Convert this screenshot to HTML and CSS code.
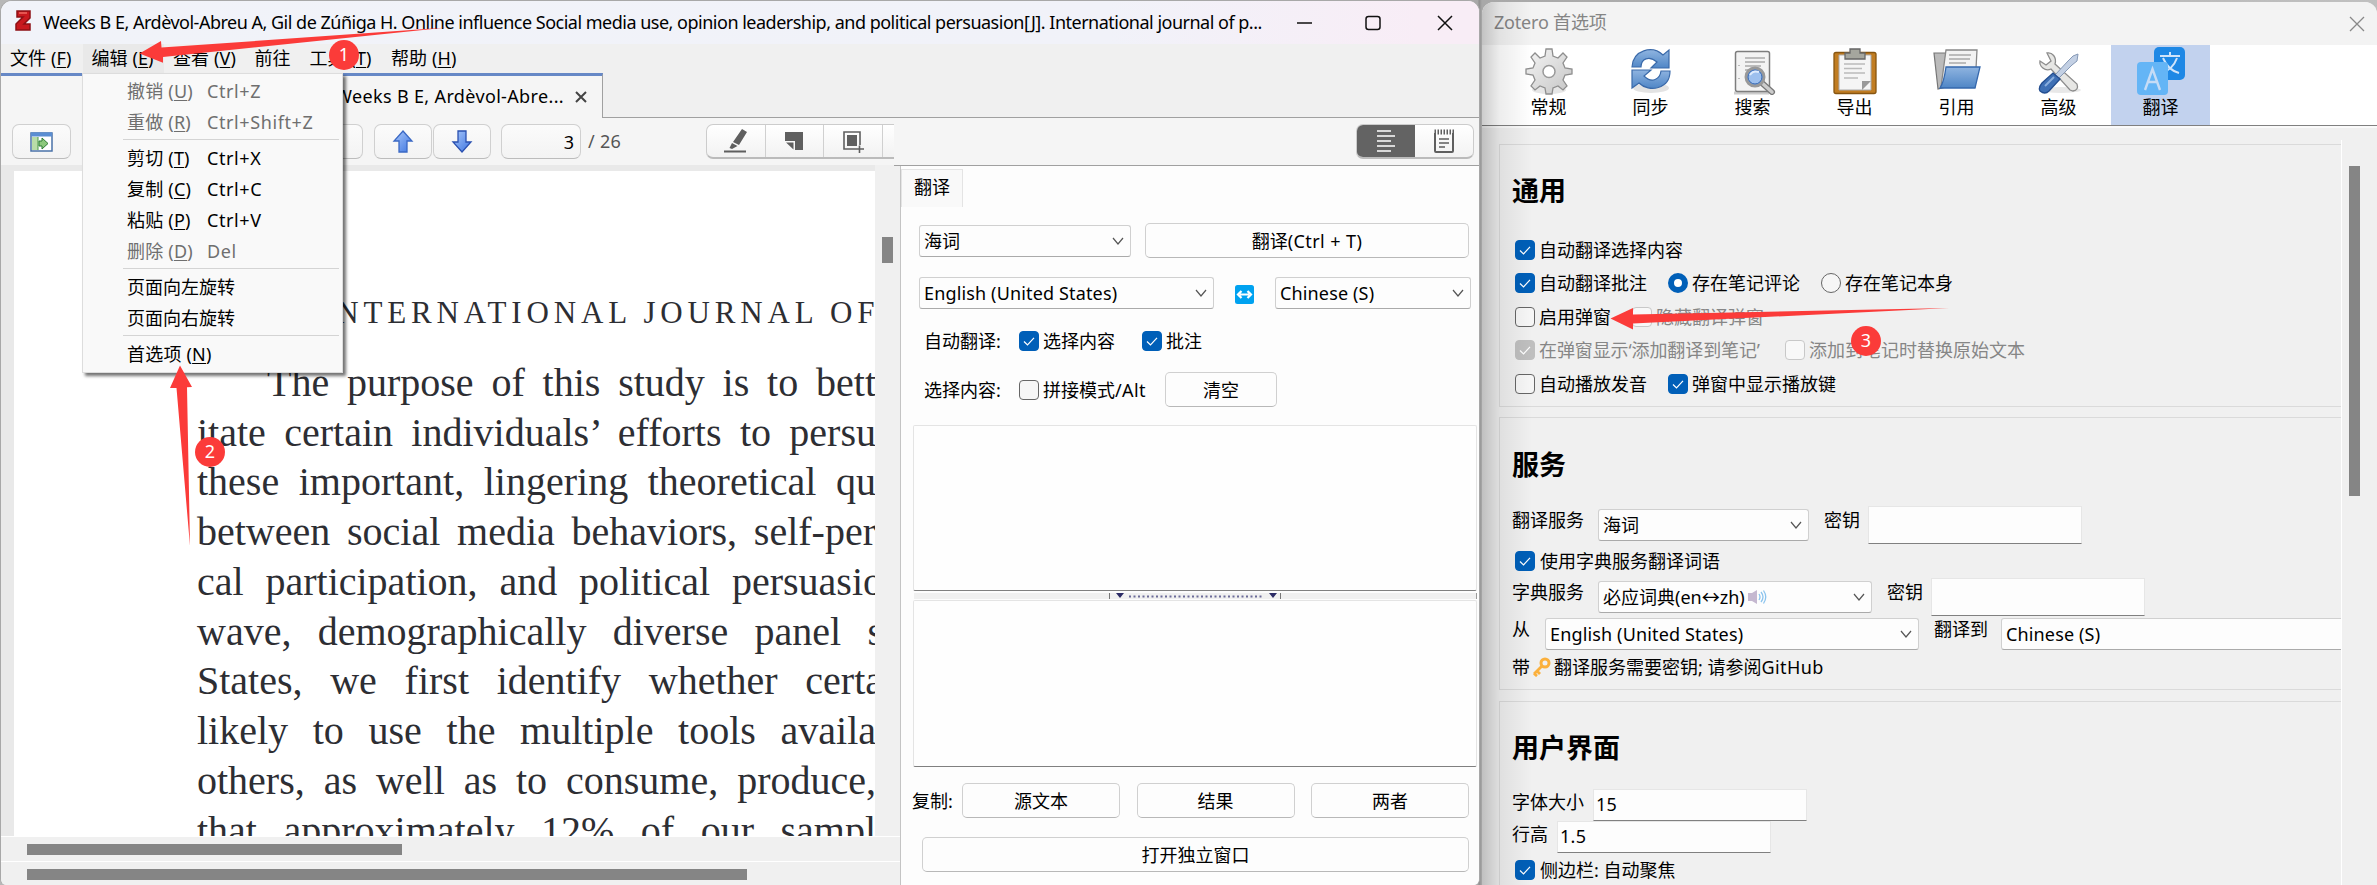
FILE: index.html
```
<!DOCTYPE html>
<html lang="zh-CN">
<head>
<meta charset="utf-8">
<title>Zotero</title>
<link rel="stylesheet" href="styles.css">
</head>
<body>
<svg width="0" height="0" class="defs">
  <defs>
    <linearGradient id="gm" x1="0" y1="0" x2="1" y2="1"><stop offset="0" stop-color="#f6f6f6"/><stop offset="1" stop-color="#c4c4c4"/></linearGradient>
    <linearGradient id="gb" x1="0" y1="0" x2="0" y2="1"><stop offset="0" stop-color="#8fb4e0"/><stop offset="1" stop-color="#4f86c6"/></linearGradient>
    <linearGradient id="ga" x1="0" y1="0" x2="1" y2="1"><stop offset="0" stop-color="#a9c8fa"/><stop offset="1" stop-color="#3d74e0"/></linearGradient>
    <symbol id="chev" viewBox="0 0 12 8"><path d="M1 1 6 7 11 1" fill="none" stroke="#555" stroke-width="1.2"/></symbol>
    <symbol id="tick" viewBox="0 0 20 20"><path d="M5 10.500 8.500 14 15 6.800" fill="none" stroke="#fff" stroke-width="1.2"/></symbol>
  </defs>
</svg>
<div class="desktop">

<main class="win">
  <header class="title">
    <svg class="logo" width="18" height="22" viewBox="0 0 18 22"><path d="M2 1H15V8L9 14H15V20H1V14L8 7H2Z" fill="#c8191e" stroke="#8d1014" stroke-width="1.5"/><path d="M4 3H12" stroke="#ef6a62" stroke-width="1.500"/></svg>
    <span class="caption">Weeks B E, Ardèvol-Abreu A, Gil de Zúñiga H. Online influence Social media use, opinion leadership, and political persuasion[J]. International journal of p...</span>
    <svg class="winctl" width="160" height="20" viewBox="0 0 160 20" fill="none" stroke="#111" stroke-width="1.500"><path d="M1 10H16M142 3 156 17M156 3 142 17"/><rect x="70" y="3.500" width="14" height="13" rx="2.500"/></svg>
  </header>
  <nav class="menubar">
    <span class="mi">文件 (<u>F</u>)</span><span class="mi on">编辑 (<u>E</u>)</span><span class="mi">查看 (<u>V</u>)</span><span class="mi short">前往</span><span class="mi">工具 (<u>T</u>)</span><span class="mi">帮助 (<u>H</u>)</span>
  </nav>
  <div class="tabs"><div class="tab"><span>Weeks B E, Ardèvol-Abre...</span><svg width="14" height="14" viewBox="0 0 14 14"><path d="M2 2 12 12M12 2 2 12" stroke="#444" stroke-width="2"/></svg></div><div class="tabfill"></div></div>
  <div class="work">
    <section class="reader">
      <div class="toolbar">
        <div class="tb side"><svg width="24" height="22" viewBox="0 0 24 22"><rect x="1" y="2" width="21" height="18" fill="#fff" stroke="#4a72a8" stroke-width="1.500"/><path d="M1 3.500H22" stroke="#5b8ed2" stroke-width="4"/><rect x="2" y="6" width="6" height="13" fill="#b9dca8"/><path d="M8 6V19" stroke="#4a9a48"/><path d="M9 10H12V7L18 12.500 12 18V15H9Z" fill="#8cc87c" stroke="#2f7c35"/></svg></div>
        <div class="tb prev"></div>
        <div class="tb up"><svg width="22" height="26" viewBox="0 0 22 26"><path d="M11 2 20 12H15V23H7V12H2Z" fill="url(#ga)" stroke="#3a68c4" stroke-width="1.300"/></svg></div>
        <div class="tb down"><svg width="22" height="26" viewBox="0 0 22 26"><path d="M11 23 20 13H15V2H7V13H2Z" fill="url(#ga)" stroke="#2a50b0" stroke-width="1.300"/></svg></div>
        <div class="tb page">3</div>
        <span class="of">/ 26</span>
        <div class="tools">
          <div><svg width="26" height="26" viewBox="0 0 26 26" fill="#5f5f5f"><path d="M19 1 24 4 16 17 10 14ZM9 15 14.500 18 9 21 6.500 20Z"/><path d="M1 23.500H23" stroke="#5f5f5f" stroke-width="1.800"/></svg></div>
          <div><svg width="20" height="20" viewBox="0 0 20 20" fill="#5f5f5f"><path d="M1 1H19V19H11V10H1Z"/><path d="M2 11.500H9.500V18.500Z"/></svg></div>
          <div><svg width="24" height="24" viewBox="0 0 24 24" fill="none" stroke="#5f5f5f" stroke-width="1.600"><path d="M15 20H3V3H19V16M18.500 16.500V24M14 20H23"/><rect x="6" y="6" width="10" height="11" fill="#5f5f5f" stroke="none"/></svg></div>
          <div></div>
        </div>
      </div>
      <div class="doc">
        <article class="paper">
          <div class="running">INTERNATIONAL JOURNAL OF</div>
          <p class="ln first">The purpose of this study is to bett</p>
          <p class="ln">itate certain individuals’ efforts to persu</p>
          <p class="ln">these important, lingering theoretical qu</p>
          <p class="ln">between social media behaviors, self-per</p>
          <p class="ln cut">cal participation, and political persuasio</p>
          <p class="ln cut">wave, demographically diverse panel s</p>
          <p class="ln cut">States, we first identify whether certa</p>
          <p class="ln">likely to use the multiple tools availa</p>
          <p class="ln">others, as well as to consume, produce,</p>
          <p class="ln">that approximately 12% of our sampl</p>
        </article>
        <div class="vscroll"><i></i></div>
      </div>
      <div class="hscroll"><i class="h1"></i></div>
      <div class="hscroll second"><i class="h2"></i></div>
    </section>
    <aside class="panel">
      <div class="ptop"><div class="toggle">
        <div class="dark"><svg width="26" height="24" viewBox="0 0 26 24" stroke="#fff" stroke-width="1.600"><path d="M4 2H18M4 7H22M4 12H18M4 17H22M4 22H18"/></svg></div>
        <div><svg width="22" height="26" viewBox="0 0 22 26" fill="none" stroke="#5f5f5f" stroke-width="2"><path d="M2 5V23Q2 24 3 24H19Q20 24 20 23V5"/><path d="M1.500 4H21" stroke-dasharray="1.500 1.500" stroke-width="5"/><path d="M6 11H16M6 15H16M6 19H12" stroke-width="1.600"/></svg></div>
      </div></div>
      <div class="pbody">
        <div class="ptab">翻译</div>
        <div class="r row1"><div class="sel w212">海词<svg><use href="#chev"/></svg></div><div class="btn w324">翻译<span class="k">(Ctrl + T)</span></div></div>
        <div class="r row2"><div class="sel w295"><span class="en">English (United States)</span><svg><use href="#chev"/></svg></div><svg class="swap" width="19" height="19" viewBox="0 0 19 19"><rect width="19" height="19" rx="2.500" fill="#00a2f0"/><path d="M5 9.500H14M6.500 6 3 9.500 6.500 13M12.500 6 16 9.500 12.500 13" fill="none" stroke="#fff" stroke-width="2.200"/></svg><div class="sel w196"><span class="en">Chinese (S)</span><svg><use href="#chev"/></svg></div></div>
        <div class="r row3"><span class="lab">自动翻译:</span><b class="cb on"><svg><use href="#tick"/></svg></b><span>选择内容</span><b class="cb on m27"><svg><use href="#tick"/></svg></b><span>批注</span></div>
        <div class="r row4"><span class="lab">选择内容:</span><b class="cb"></b><span class="join">拼接模式<span class="k">/Alt</span></span><div class="btn w112">清空</div></div>
        <div class="ta"></div>
        <div class="split"><svg width="172" height="6" viewBox="0 0 172 6"><path d="M.5 0V6M171.500 0V6" stroke="#777"/><path d="M7 0H15L11 5ZM160 0H168L164 5Z" fill="#2c2c66"/><path d="M20 3.500H153" stroke="#6b6b98" stroke-width="2" stroke-dasharray="2 2.500"/></svg></div>
        <div class="ta two"></div>
        <div class="r row5"><span class="copy">复制:</span><div class="btn">源文本</div><div class="btn">结果</div><div class="btn">两者</div></div>
        <div class="btn open">打开独立窗口</div>
      </div>
    </aside>
  </div>
</main>

<section class="prefs">
  <header class="ptitle"><span>Zotero 首选项</span><svg width="16" height="16" viewBox="0 0 16 16"><path d="M1 1 15 15M15 1 1 15" stroke="#888" stroke-width="1.300"/></svg></header>
  <div class="ptools">
    <div class="pt"><svg width="48" height="48" viewBox="0 0 48 48"><ellipse cx="24" cy="43" rx="17" ry="4" fill="#e6e6e6"/><path d="M21 2H27L28 9 33 11 38 6 42 10 38 16 40 21 47 22V27L40 28 38 33 42 39 38 43 33 39 28 41 27 47H21L20 41 15 39 10 43 6 39 10 33 8 28 1 27V22L8 21 10 16 6 10 10 6 15 11 20 9Z" fill="url(#gm)" stroke="#8e8e8e" stroke-width="1.300"/><circle cx="24" cy="24.500" r="6" fill="#fff" stroke="#999" stroke-width="1.500"/></svg>常规</div>
    <div class="pt"><svg width="48" height="48" viewBox="0 0 48 48"><ellipse cx="24" cy="41" rx="18" ry="5" fill="#e3e3e3"/><path d="M5 20C6 3 25-2 36 8L42 3V21H24L30 15C22 8 14 12 14 20Z" fill="url(#gb)" stroke="#3a6aaa" stroke-width="1.200"/><path d="M43 24C43 42 22 46 12 36L5 41V23H24L17 29C25 37 33 32 34 24Z" fill="url(#gb)" stroke="#3a6aaa" stroke-width="1.200"/></svg>同步</div>
    <div class="pt"><svg width="48" height="48" viewBox="0 0 48 48"><path d="M5 46H40" stroke="#ccc" stroke-width="3"/><rect x="6.500" y="4.500" width="34" height="40" rx="2" fill="#f3f3f3" stroke="#7d7d7d" stroke-width="1.500"/><path d="M16 11H36M16 15H36M16 19H32M16 23H22M10 18V19M10 31V32" stroke="#aaa" stroke-width="1.500"/><path d="M33 36 43 45" stroke="#777" stroke-width="6" stroke-linecap="round"/><path d="M33 36 43 45" stroke="#ccc" stroke-width="3.500" stroke-linecap="round"/><circle cx="26" cy="30" r="9" fill="#8cb3e6" stroke="#999" stroke-width="3"/><circle cx="26" cy="30" r="7" fill="#9dc0ee" stroke="#3566b0"/><path d="M21 28Q24 23 30 25" stroke="#deebfc" stroke-width="2" fill="none"/></svg>搜索</div>
    <div class="pt"><svg width="48" height="48" viewBox="0 0 48 48"><rect x="3" y="5.500" width="42" height="41" rx="2" fill="#c17d22" stroke="#875510" stroke-width="1.300"/><path d="M8 8H40V43H8Z" fill="#f5f5f5" stroke="#aaa"/><path d="M13 17H34M13 21.500H31M13 26H34M13 31H27" stroke="#bbb" stroke-width="1.300"/><path d="M40 34H31V43Z" fill="#999"/><path d="M14 12V6H19V2H29V6H34V12Z" fill="#a5a69e" stroke="#666" stroke-width="1.300"/></svg>导出</div>
    <div class="pt"><svg width="50" height="48" viewBox="0 0 50 48"><path d="M2 6H14V40L6 42Z" fill="#bbb" stroke="#777" stroke-width="1.200"/><path d="M14 3H45L43 40H9Z" fill="#f3f3f3" stroke="#888" stroke-width="1.300"/><path d="M17 8H39M17 12H38M17 16H34" stroke="#aaa" stroke-width="1.500"/><path d="M14 20H48L43 41H8Q12 35 14 20Z" fill="url(#gb)" stroke="#3568ad" stroke-width="1.300"/></svg>引用</div>
    <div class="pt"><svg width="48" height="48" viewBox="0 0 48 48"><ellipse cx="26" cy="43" rx="20" ry="3" fill="#e8e8e8"/><path d="M12 6C17 5 22 10 20 17L42 37Q44 43 38 44L35 43 16 22C10 25 4 19 5 14L11 18 16 14Z" fill="#e6e6e4" stroke="#8c8c8c" stroke-width="1.300"/><path d="M38 9 43 7 42 14 37 18 24 31 20 28 33 14Z" fill="#c3d0e4" stroke="#8598b5"/><path d="M18 26 25 32 14 44Q10 48 5 44 3 41 7 36Z" fill="#3f70b5" stroke="#244e90" stroke-width="1.300"/><path d="M10 39 19 30" stroke="#89aede" stroke-width="2"/></svg>高级</div>
    <div class="pt sel-on"><svg width="48" height="48" viewBox="0 0 48 48"><rect x="17" y="0" width="31" height="33" rx="5" fill="#1e88e5"/><path d="M23 9H43M33 5V9M26 11Q31 23 42 26M40 11Q36 22 25 26" stroke="#d0e4fa" stroke-width="2" fill="none"/><rect x="0" y="15" width="31" height="33" rx="4" fill="#64b5f6"/><path d="M8 43 15.500 22 23 43M10.500 35H20.500" stroke="#c6dcf6" stroke-width="2.400" fill="none"/></svg>翻译</div>
  </div>
  <div class="pcontent">
    <div class="scroller">
      <fieldset class="box b1">
        <h2>通用</h2>
        <div class="o"><b class="cb on"><svg><use href="#tick"/></svg></b><span>自动翻译选择内容</span></div>
        <div class="o"><b class="cb on"><svg><use href="#tick"/></svg></b><span>自动翻译批注</span><b class="rd on"></b><span>存在笔记评论</span><b class="rd"></b><span>存在笔记本身</span></div>
        <div class="o"><b class="cb"></b><span>启用弹窗</span><b class="cb dis"></b><span class="gray">隐藏翻译弹窗</span></div>
        <div class="o"><b class="cb dison"><svg><use href="#tick"/></svg></b><span class="gray w225">在弹窗显示‘添加翻译到笔记’</span><b class="cb dis"></b><span class="gray">添加到笔记时替换原始文本</span></div>
        <div class="o"><b class="cb"></b><span>自动播放发音</span><b class="cb on"><svg><use href="#tick"/></svg></b><span>弹窗中显示播放键</span></div>
      </fieldset>
      <fieldset class="box b2">
        <h2>服务</h2>
        <div class="f f1"><label>翻译服务</label><div class="sel w211">海词<svg><use href="#chev"/></svg></div><label class="key">密钥</label><div class="inp tall"></div></div>
        <div class="o"><b class="cb on"><svg><use href="#tick"/></svg></b><span>使用字典服务翻译词语</span></div>
        <div class="f f2"><label>字典服务</label><div class="sel w274"><span class="nw">必应词典<span class="k2">(en↔zh)</span></span><svg class="spk" width="20" height="16" viewBox="0 0 20 16"><path d="M1 4H5L10 1V15L5 12H1Z" fill="#c5b8d0"/><path d="M12 5Q14 8 12 11M14 3Q18 8 14 13M16.500 1.500Q21 8 16.500 14.500" fill="none" stroke="#8cc4ee" stroke-width="1.300"/></svg><svg><use href="#chev"/></svg></div><label class="key">密钥</label><div class="inp tall"></div></div>
        <div class="f f3"><label class="from">从</label><div class="sel w374"><span class="en">English (United States)</span><svg><use href="#chev"/></svg></div><label class="key">翻译到</label><div class="sel w374 last"><span class="en">Chinese (S)</span></div></div>
        <div class="note">带<svg width="24" height="20" viewBox="0 0 24 20"><circle cx="15" cy="6" r="4" fill="none" stroke="#fbb03c" stroke-width="3"/><path d="M12 9 4 17M7 14 10 17M4 16.500 7 19" stroke="#fbb03c" stroke-width="2.800"/></svg>翻译服务需要密钥; 请参阅<span class="k">GitHub</span></div>
      </fieldset>
      <fieldset class="box b3">
        <h2>用户界面</h2>
        <div class="f g"><label>字体大小</label><div class="inp">15</div></div>
        <div class="f g"><label>行高</label><div class="inp">1.5</div></div>
        <div class="o"><b class="cb on"><svg><use href="#tick"/></svg></b><span>侧边栏: 自动聚焦</span></div>
      </fieldset>
    </div>
    <div class="pscroll"><i></i></div>
  </div>
</section>

<div class="menu">
  <div class="it d"><span>撤销 (<u>U</u>)</span><kbd>Ctrl+Z</kbd></div>
  <div class="it d"><span>重做 (<u>R</u>)</span><kbd>Ctrl+Shift+Z</kbd></div>
  <hr>
  <div class="it"><span>剪切 (<u>T</u>)</span><kbd>Ctrl+X</kbd></div>
  <div class="it"><span>复制 (<u>C</u>)</span><kbd>Ctrl+C</kbd></div>
  <div class="it"><span>粘贴 (<u>P</u>)</span><kbd>Ctrl+V</kbd></div>
  <div class="it d"><span>删除 (<u>D</u>)</span><kbd>Del</kbd></div>
  <hr>
  <div class="it">页面向左旋转</div>
  <div class="it">页面向右旋转</div>
  <hr>
  <div class="it"><span>首选项 (<u>N</u>)</span></div>
</div>

<svg class="marks" width="2377" height="885" viewBox="0 0 2377 885" fill="#fb3b39">
  <path d="M139.500 53.500 161 41 161.500 47.500 447 27.500 163 57 163 62.700Z"/>
  <path d="M180 365.500 192 387 187 387.300 190 546 176.500 388 170 388Z"/>
  <path d="M1610.500 318.500 1633 308 1633 314.500 1949 308 1633 323.500 1633 329.500Z"/>
  <circle cx="344" cy="55" r="15"/><circle cx="210" cy="452" r="15"/><circle cx="1866" cy="341" r="15"/>
  <g class="num" text-anchor="middle"><text x="344" y="61">1</text><text x="210" y="458">2</text><text x="1866" y="347">3</text></g>
</svg>
</div>
</body>
</html>
```
FILE: styles.css
```
* { box-sizing: border-box; }
body { margin: 0; background: #c4c4c4; overflow: hidden; font: 18px/24px "Noto Sans", "Noto Sans CJK SC", sans-serif; color: #000; white-space: nowrap; }
u { text-underline-offset: 2px; text-decoration-thickness: 1px; }
p, h2, hr { margin: 0; }
.defs { position: absolute; }
.desktop { position: relative; display: flex; width: 2377px; height: 885px; background: linear-gradient(90deg, #b8b8b8, #a8a8a8 1478px, #8e8e8e 1479px, #a8a8a8 1482px, #c0c0c0); }

/* main window */
.win { width: 1480px; height: 885px; border: solid #a8a8a8; border-width: 1px 1px 0 1px; border-radius: 12px 12px 6px 6px; overflow: hidden; display: flex; flex-direction: column; background: #f0f0f0; }
.title { height: 43px; display: flex; align-items: center; padding-left: 14px; background: linear-gradient(90deg, #f1f3f9 0, #f1f2f9 75%, #f8edf6 96%); }
.logo { margin-top: -3px; }
.caption { margin-left: 10px; width: 1253px; letter-spacing: -.5px; margin-top: -2px; }
.menubar { height: 29px; display: flex; }
.mi { padding: 2px 0 0 9px; width: 81.500px; letter-spacing: .1px; flex: none; }
.mi.short { width: 55px; }
.mi.on { background: #e9e9e9; }
.tabs { height: 45px; display: flex; }
.tab { width: 602px; border-top: 3px solid #6688c6; border-right: 1px solid #a0a0a0; background: #f5f5f5; display: flex; align-items: center; justify-content: flex-end; padding-right: 14px; gap: 10px; letter-spacing: .35px; }
.tab span { margin-top: -3px; }
.tabfill { flex: 1; border-bottom: 1px solid #a0a0a0; }
.work { flex: 1; display: flex; min-height: 0; }
.reader { width: 900px; flex: none; display: flex; flex-direction: column; border-right: 1px solid #c4c4c4; }
.toolbar { height: 48px; width: 893px; overflow: hidden; background: #f5f5f5; display: flex; padding: 6px 0 0 11px; }
.tb { height: 35px; border: 1px solid #d0d0d0; border-radius: 7px; background: linear-gradient(#fbfbfb, #f3f3f3); border-bottom-color: #bcbcbc; display: flex; align-items: center; justify-content: center; flex: none; }
.side { width: 59px; }
.prev { width: 58px; margin-left: 234px; }
.up { width: 58px; margin-left: 11px; }
.down { width: 58px; margin-left: 1px; }
.page { width: 80px; margin-left: 10px; justify-content: flex-end; padding-right: 6px; }
.of { margin: 5px 0 0 7px; width: 118px; color: #555; flex: none; letter-spacing: .3px; }
.tools { height: 35px; width: 236px; flex: none; display: flex; border: 1px solid #ccc; border-bottom: 2px solid #bbb; border-radius: 7px; background: linear-gradient(#fff, #f2f2f2); }
.tools div { width: 58.500px; border-right: 1px solid #d0d0d0; display: flex; align-items: center; justify-content: center; }
.doc { height: 671px; display: flex; background: #e9e9e9; padding: 6px 0 0 13px; }
.paper { width: 862px; background: #fff; overflow: hidden; padding-left: 183px; font-family: "Liberation Serif", serif; color: #2d2e33; }
.running { font-size: 31px; line-height: 40px; letter-spacing: 4.850px; margin: 122px 0 0 124px; height: 65px; width: 600px; }
.ln { font-size: 40px; line-height: 49.750px; height: 49.750px; width: 679px; text-align: justify; text-align-last: justify; white-space: normal; word-break: keep-all; }
.first { padding-left: 70px; }
.cut { width: 686px; }
.vscroll { width: 25px; margin-top: -6px; background: #f0f0f0; padding: 72px 0 0 7px; }
.vscroll i { display: block; width: 11px; height: 26px; background: #858585; }
.hscroll { height: 26px; background: #f0f0f0; border-top: 1px solid #fff; padding: 7px 0 0 26px; }
.hscroll i { display: block; height: 11px; background: #858585; }
.hscroll.second { height: 24px; }
.h1 { width: 375px; } .h2 { width: 720px; }

.panel { flex: 1; min-width: 0; display: flex; flex-direction: column; background: #fdfdfd; }
.ptop { height: 48px; margin-left: -7px; background: #f5f5f5; border-bottom: 1px solid #a0a0a0; display: flex; justify-content: flex-end; padding: 6px 5px 0 0; }
.toggle { display: flex; width: 118px; height: 35px; border: 1px solid #ccc; border-bottom: 2px solid #bbb; border-radius: 7px; overflow: hidden; background: linear-gradient(#fff, #f3f3f3); }
.toggle div { flex: 1; display: flex; align-items: center; justify-content: center; }
.toggle .dark { background: #636363; }
.pbody { height: 719px; padding: 3px 0 0 0; }
.ptab { width: 62px; height: 38px; background: #f9f9f9; border: 1px solid #e4e4e4; border-bottom: 0; padding: 5px 0 0 12px; }
.r { display: flex; align-items: center; padding-left: 18px; }
.sel { height: 32px; border: 1px solid #d0d0d0; border-bottom-color: #aaa; border-radius: 3px; background: #fdfdfd; display: flex; align-items: center; padding: 0 6px 0 4px; flex: none; }
.sel > svg { width: 12px; height: 8px; margin-left: auto; flex: none; }
.btn { height: 35px; border: 1px solid #d0d0d0; border-bottom-color: #b8b8b8; border-radius: 5px; background: #fdfdfd; display: flex; align-items: center; justify-content: center; flex: none; }
.w212 { width: 212px; } .w324 { width: 324px; } .w295 { width: 295px; } .w196 { width: 196px; } .w112 { width: 112px; } .w211 { width: 211px; } .w274 { width: 274px; } .w374 { width: 374px; }
.en { letter-spacing: .15px; }
.k { letter-spacing: .4px; }
.row1 { margin-top: 16px; height: 35px; gap: 14px; }
.row2 { margin-top: 19px; height: 32px; }
.swap { margin: 3px 21px 0; }
.row3 { margin-top: 22px; height: 20px; padding-left: 23px; }
.row4 { margin-top: 21px; height: 35px; padding-left: 23px; }
.lab { width: 95px; }
.cb, .rd { width: 20px; height: 20px; border: 1px solid #666; border-radius: 4px; background: #f6f6f6; margin-right: 4px; flex: none; display: block; }
.cb svg { display: block; width: 20px; height: 20px; margin: -1px; }
.cb.on { background: #005fb8; border-color: #005fb8; }
.cb.dis { border-color: #c8c8c8; background: #f8f8f8; }
.cb.dison { background: #bfbfbf; border-color: #bfbfbf; }
.m27 { margin-left: 27px; }
.rd { border-radius: 50%; }
.rd.on { border: 6px solid #005fb8; background: #fff; }
.join { width: 122px; }
.ta { margin: 18px 2px 0 12px; height: 166px; border: 1px solid #e4e4e4; border-bottom-color: #808080; border-radius: 2px; background: #fefefe; }
.split { height: 6px; margin: 2px 2px 1px 13px; background: #f0f0f0; border-right: 1px solid #999; display: flex; padding-left: 195px; }
.ta.two { margin-top: 0; height: 167px; }
.row5 { margin-top: 16px; height: 35px; padding-left: 11px; }
.row5 .btn { width: 158px; margin-right: 16.500px; }
.row5 .btn:last-child { margin-right: 0; }
.copy { width: 50px; flex: none; }
.open { width: 547px; margin: 19px 0 0 21px; }

/* preferences window */
.prefs { position: relative; margin: 2px 0 0 2px; width: 895px; height: 883px; border-radius: 12px 12px 0 0; overflow: hidden; background: #f0f0f0; }
.prefs::after { content: ""; position: absolute; inset: 0 auto 0 0; width: 50px; background: linear-gradient(90deg, rgba(0,0,0,.2), rgba(0,0,0,.07) 35%, transparent); }
.ptitle { height: 43px; display: flex; align-items: center; justify-content: space-between; padding: 0 12px; background: #f3f3f3; color: #858585; letter-spacing: -.2px; }
.ptitle span { margin-top: -3px; }
.ptools { height: 81px; background: #fff; border-bottom: 1px solid #808080; padding-left: 17px; display: flex; gap: 3px; }
.pt { width: 99px; display: flex; flex-direction: column; align-items: center; padding-top: 2px; line-height: 26px; }
.pt svg { flex: none; margin-bottom: -1px; }
.sel-on { background: #c2d2ee; }
.pcontent { display: flex; height: 759px; border-top: 2px solid #fafafa; }
.scroller { width: 859px; padding: 16px 0 0 17px; overflow: hidden; }
.box { margin: 0; padding: 0 0 0 12px; border: 1px solid #dadada; border-right: 0; min-width: 0; overflow: hidden; }
.b1 { height: 263px; }
.b2 { height: 273px; margin-top: 10px; }
.b3 { height: 200px; margin-top: 11px; }
h2 { font-size: 27px; line-height: 36px; margin-top: 28px; font-weight: 700; }
.b2 h2 { margin-top: 29px; }
.o { display: flex; align-items: center; height: 33.500px; padding-left: 3px; }
.o span + b { margin-left: 21px; }
.o b + span { margin-left: 1px; margin-right: -1px; }
.b1 .o b + span { margin-left: 0; margin-right: 0; }
.b1 .o:nth-child(2) { margin-top: 24px; }
.gray { color: #868686; }
.w225 { width: 225px; letter-spacing: -.1px; }
.f { display: flex; }
.f label { width: 86px; flex: none; margin-top: 2px; }
.f .key { width: auto; margin: 2px 8px 0 15px; }
.f1 { height: 38px; margin-top: 23px; }
.f .sel { margin-top: 3px; }
.inp { width: 214px; height: 32px; background: #fdfdfd; border: 1px solid #e6e6e6; border-bottom-color: #808080; padding: 2px; letter-spacing: .3px; }
.tall { height: 38px; }
.b2 .o { height: 34px; }
.f2 { height: 37px; }
.nw { letter-spacing: 0; }
.sel > .spk { width: 20px; height: 16px; margin-left: 2px; }
.f3 { height: 37px; }
.f .from { width: 33px; }
.f3 .key { margin-right: 13px; }
.note { display: flex; align-items: center; height: 28px; margin-top: 1px; }
.f.g { height: 32px; }
.b3 h2 { margin-bottom: 23px; }
.f.g label { width: auto; margin-right: 9px; margin-top: 1px; }
.b3 .o { height: 34px; }
.pscroll { flex: 1; border-left: 1px solid #fff; padding: 26px 0 0 7px; margin-top: 12px; }
.pscroll i { display: block; width: 11px; height: 330px; background: #858585; }

/* open menu */
.menu { position: absolute; left: 82px; top: 73px; width: 261px; height: 300px; padding: 1px 3px 0 40px; background: #f9f9f9; border: 1px solid #ddd; box-shadow: 3px 3px 3px rgba(0,0,0,.55); }
.it { height: 31px; display: flex; align-items: center; padding-left: 4px; }
.it span { width: 80px; letter-spacing: .2px; }
.it kbd { font: inherit; letter-spacing: .6px; }
.it.d { color: #6f6f6f; }
hr { height: 1px; border: 0; background: #d4d4d4; margin: 2px 0; }
.marks { position: absolute; left: 0; top: 0; }
.num { fill: #fff; font-size: 18px; }
```
